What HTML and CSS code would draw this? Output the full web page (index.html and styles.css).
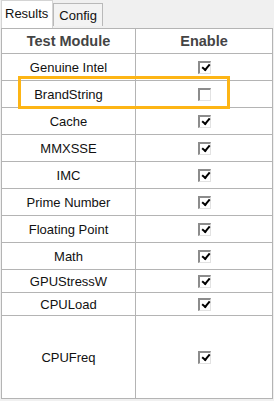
FILE: index.html
```html
<!DOCTYPE html>
<html>

<head>
  <link rel="stylesheet" href="styles.css">
</head>

<body>

  <div id="fereastra">

    <div class="tabs">
      <div class="tab activ">Results</div>
      <div class="tab">Config</div>
    </div>

    <table class="teste">
      <tr class="cap">
        <th class="colNume">Test Module</th>
        <th>Enable</th>
      </tr>
      <tr><td>Genuine Intel</td><td><span class="bifa on"></span></td></tr>
      <tr class="marcat"><td><div class="chenar"></div>BrandString</td><td><span class="bifa"></span></td></tr>
      <tr><td>Cache</td><td><span class="bifa on"></span></td></tr>
      <tr><td>MMXSSE</td><td><span class="bifa on"></span></td></tr>
      <tr><td>IMC</td><td><span class="bifa on"></span></td></tr>
      <tr><td>Prime Number</td><td><span class="bifa on"></span></td></tr>
      <tr><td>Floating Point</td><td><span class="bifa on"></span></td></tr>
      <tr><td>Math</td><td><span class="bifa on"></span></td></tr>
      <tr class="mic"><td>GPUStressW</td><td><span class="bifa on"></span></td></tr>
      <tr class="mic"><td>CPULoad</td><td><span class="bifa on"></span></td></tr>
      <tr class="mare"><td>CPUFreq</td><td><span class="bifa on"></span></td></tr>
    </table>

  </div>

</body>

</html>
```

FILE: styles.css
```css
body {
  margin: 0;
  background-color: #f0f0f0;
  font-family: "Liberation Sans", Arial, sans-serif;
  font-size: 13px;
  color: #111;
}

#fereastra {
  width: 274px;
  height: 401px;
  position: relative;
}

.tabs {
  display: flex;
  height: 28px;
  align-items: flex-end;
  padding-left: 1px;
}

.tab {
  height: 22px;
  padding: 0 5px;
  margin-bottom: 2px;
  border: 1px solid #b9b9b9;
  border-bottom: none;
  background-color: #f3f3f3;
  line-height: 24px;
  font-size: 13px;
}

.tab.activ {
  height: 27px;
  margin-bottom: 0;
  background-color: #ffffff;
  line-height: 26px;
  padding: 0 4px 0 3px;
  border-color: #d4d4d4;
}

.teste {
  margin-left: 1px;
  width: 272px;
  border-collapse: collapse;
  background-color: #ffffff;
  table-layout: fixed;
}

.teste td,
.teste th {
  border: 1px solid #b4b4b4;
  text-align: center;
  padding: 0;
  height: 26px;
  position: relative;
}

.teste th {
  font-size: 14.5px;
  font-weight: bold;
  color: #444;
  height: 24px;
}

.colNume {
  width: 133px;
}

.teste tr.mic td {
  height: 22px;
}

.teste tr.mare td {
  height: 82px;
}

.chenar {
  position: absolute;
  left: 16px;
  top: -5px;
  width: 206px;
  height: 27px;
  border: 3px solid #fdb515;
}

.bifa {
  display: inline-block;
  width: 10px;
  height: 10px;
  vertical-align: middle;
  margin-top: -2px;
  background-color: #fff;
  border-top: 2px solid #8c8c8c;
  border-left: 2px solid #8c8c8c;
  border-right: 1px solid #e2e2e2;
  border-bottom: 1px solid #e2e2e2;
  position: relative;
}

.bifa.on::after {
  content: "";
  position: absolute;
  left: 2px;
  top: 1px;
  width: 6px;
  height: 3px;
  border-left: 2px solid #000;
  border-bottom: 2px solid #000;
  transform: rotate(-50deg);
}
```
